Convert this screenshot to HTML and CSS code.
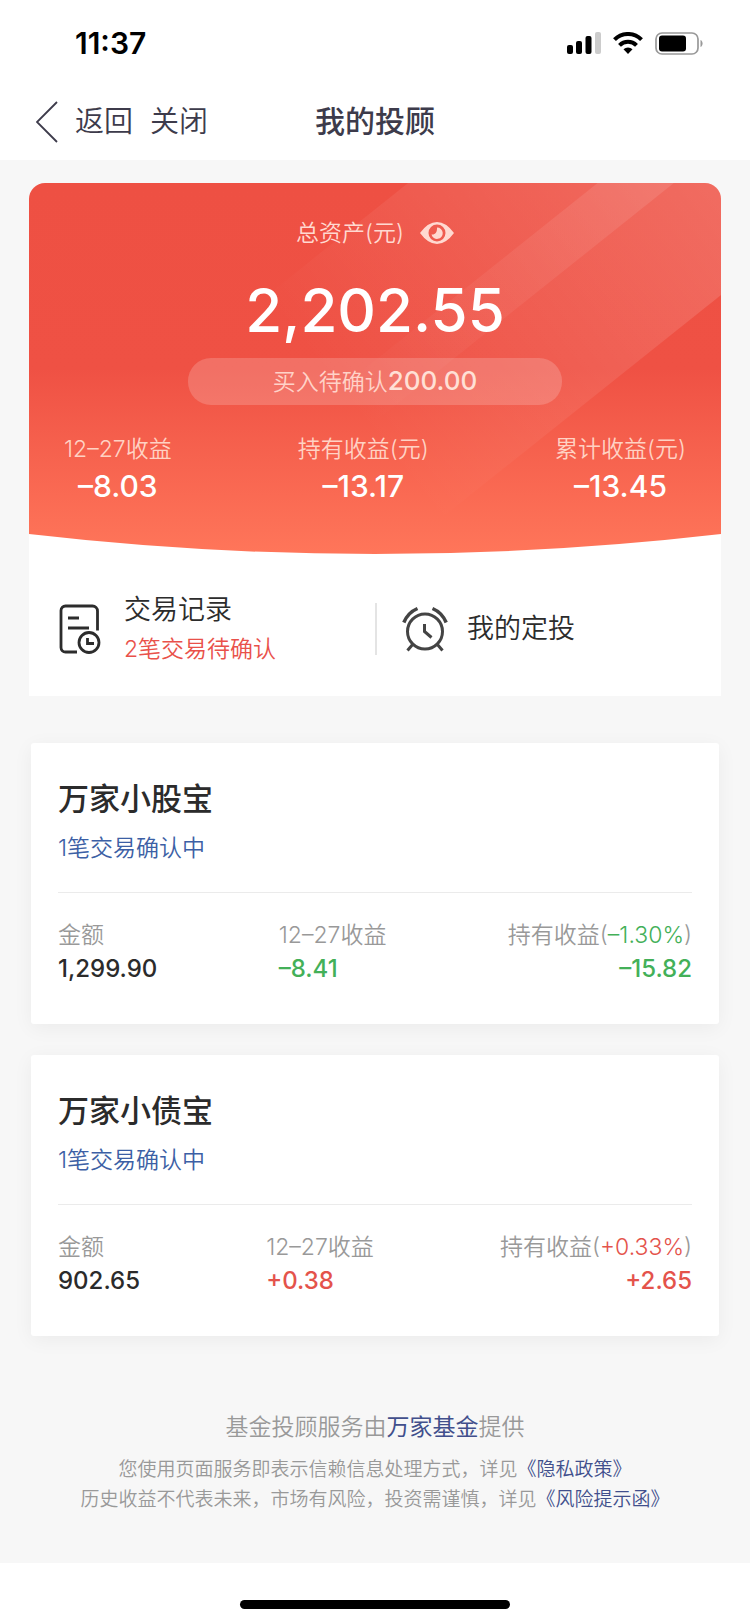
FILE: index.html
```html
<!DOCTYPE html>
<html lang="zh-CN">
<head>
<meta charset="utf-8">
<meta name="viewport" content="width=device-width, initial-scale=1">
<title>我的投顾</title>
<link rel="stylesheet" href="styles.css">
</head>
<body>
<div class="status">
  <span class="status-time">11:37</span>
  <div class="status-icons">
    <svg width="34" height="22" viewBox="0 0 34 22" aria-hidden="true"><rect x="0" y="13" width="6" height="9" rx="2"/><rect x="9" y="9" width="6" height="13" rx="2"/><rect x="18.500" y="4" width="6" height="18" rx="2"/><rect x="28" y="0" width="6" height="22" rx="2" fill="#ccc"/></svg>
    <svg width="30" height="22" viewBox="0 0 30 22" aria-hidden="true"><g fill="none" stroke="#000" stroke-width="4"><path d="M1.500 7.600a19 19 0 0 1 27 0"/><path d="M6.500 13.400a12 12 0 0 1 17 0"/></g><path d="M15 22l-4.500-4.700a6.500 6.500 0 0 1 9 0z"/></svg>
    <svg width="48" height="23" viewBox="0 0 48 23" aria-hidden="true"><rect x="1" y="1" width="42" height="21" rx="6" fill="none" stroke="#999" stroke-width="1.700"/><rect x="4" y="3.500" width="27" height="16" rx="3"/><path d="M45.500 8c2.800 1.200 2.800 5.800 0 7z" fill="#999"/></svg>
  </div>
</div>
<header class="nav">
  <div class="nav-left">
    <button class="nav-button" type="button"><svg width="22" height="42" viewBox="0 0 22 42" aria-hidden="true"><path d="M21 1L1 21l20 20" fill="none" stroke="currentColor" stroke-width="1.800"/></svg>返回</button>
    <button class="nav-button" type="button">关闭</button>
  </div>
  <h1 class="nav-title">我的投顾</h1>
</header>
<main class="page">
  <section class="summary">
    <div class="hero">
      <svg class="hero-bg" viewBox="0 0 690 372" preserveAspectRatio="none" aria-hidden="true">
        <defs>
          <linearGradient id="base" x1="0" y1="0" x2="0" y2="1"><stop offset="0" stop-color="#ee5043"/><stop offset=".5" stop-color="#ef5144"/><stop offset="1" stop-color="#ff765a"/></linearGradient>
          <linearGradient id="wide" gradientUnits="userSpaceOnUse" x1="690" y1="0" x2="350" y2="265"><stop offset="0" stop-color="#fff" stop-opacity=".16"/><stop offset="1" stop-color="#fff" stop-opacity="0"/></linearGradient>
          <linearGradient id="beam" gradientUnits="userSpaceOnUse" x1="605" y1="0" x2="330" y2="230"><stop offset="0" stop-color="#fff" stop-opacity=".1"/><stop offset="1" stop-color="#fff" stop-opacity="0"/></linearGradient>
          <clipPath id="curve"><path d="M0 0h690v351Q345 391 0 351z"/></clipPath>
        </defs>
        <g clip-path="url(#curve)"><path d="M0 0h690v372H0z" fill="url(#base)"/><path d="M378 0H690V112L365 372H-87z" fill="url(#wide)"/><path d="M567 0h76L178 372h-76z" fill="url(#beam)"/></g>
      </svg>
      <div class="hero-body">
        <div class="total-label"><span>总资产(元)</span>
          <button class="eye" type="button" aria-label="隐藏金额"><svg width="34" height="22" viewBox="0 0 34 22" aria-hidden="true"><path fill="currentColor" fill-rule="evenodd" d="M0 11Q8 0 17 0t17 11q-8 11-17 11T0 11zM17 2.500a8.500 8.500 0 1 0 0 17a8.500 8.500 0 0 0 0-17z"/><path fill="currentColor" d="M17 5.500a5.700 5.700 0 1 1-5.500 7c3.500.5 5.800-2 5.500-7z"/></svg></button>
        </div>
        <p class="total">2,202.55</p>
        <p class="pending">买入待确认<strong>200.00</strong></p>
        <dl class="stats">
          <div><dt>12–27收益</dt><dd>–8.03</dd></div>
          <div><dt>持有收益(元)</dt><dd>–13.17</dd></div>
          <div><dt>累计收益(元)</dt><dd>–13.45</dd></div>
        </dl>
      </div>
    </div>
    <nav class="actions">
      <a class="action" href="#records">
        <svg width="42" height="50" viewBox="0 0 42 50" fill="none" stroke="currentColor" stroke-width="2.800" aria-hidden="true"><path d="M18 48H6.500A4.500 4.500 0 0 1 2 43.500V6.500A4.500 4.500 0 0 1 6.500 2h27A5 5 0 0 1 38.500 7v19.500"/><path d="M9 14h11M9 24h21"/><circle cx="30" cy="38.500" r="10"/><path d="M28.500 34v5.500H35"/></svg>
        <span class="action-text">交易记录<small>2笔交易待确认</small></span>
      </a>
      <a class="action" href="#plan">
        <svg width="46" height="46" viewBox="0 0 46 46" fill="none" stroke="#444" stroke-width="3" aria-hidden="true"><circle cx="23" cy="25.500" r="17.500"/><path d="M22.500 18v7.500l7 6"/><path d="M11 38l-5.500 6.500M35 38l5.500 6.500"/><path stroke-width="3.500" d="M1.800 16.500Q6 6.500 15.500 2.500M44.200 16.500Q40 6.500 30.500 2.500"/></svg>
        <span class="action-text">我的定投</span>
      </a>
    </nav>
  </section>

  <section class="fund">
    <h2 class="fund-title">万家小股宝</h2>
    <a class="fund-note" href="#f1">1笔交易确认中</a>
    <dl class="figures">
      <div><dt>金额</dt><dd>1,299.90</dd></div>
      <div><dt>12–27收益</dt><dd class="down">–8.41</dd></div>
      <div><dt>持有收益(<span class="down">–1.30%</span>)</dt><dd class="down">–15.82</dd></div>
    </dl>
  </section>
  <section class="fund">
    <h2 class="fund-title">万家小债宝</h2>
    <a class="fund-note" href="#f2">1笔交易确认中</a>
    <dl class="figures">
      <div><dt>金额</dt><dd>902.65</dd></div>
      <div><dt>12–27收益</dt><dd class="up">+0.38</dd></div>
      <div><dt>持有收益(<span class="up">+0.33%</span>)</dt><dd class="up">+2.65</dd></div>
    </dl>
  </section>

  <footer class="footer">
    <p class="provider">基金投顾服务由<a href="#company">万家基金</a>提供</p>
    <p class="legal">您使用页面服务即表示信赖信息处理方式，详见<a href="#privacy">《隐私政策》</a></p>
    <p class="legal">历史收益不代表未来，市场有风险，投资需谨慎，详见<a href="#risk">《风险提示函》</a></p>
  </footer>
</main>
<div class="home"><span class="home-bar"></span></div>
</body>
</html>
```
FILE: styles.css
```css
* { box-sizing: border-box; margin: 0; padding: 0; }
body {
  min-height: 100vh;
  display: flex;
  flex-direction: column;
  background: #fff;
  color: #2b2b2b;
  font-family: Inter, "Noto Sans CJK SC", sans-serif;
  font-size: 23px;
  font-weight: 350;
}
a { color: inherit; text-decoration: none; }
button { border: 0; background: none; color: inherit; font: inherit; cursor: pointer; }
svg { display: block; flex: none; }

.status { display: flex; align-items: center; justify-content: space-between; height: 82px; padding: 4px 47px 0 75px; color: #000; }
.status-time { font-size: 30px; font-weight: 600; }
.status-icons { display: flex; align-items: center; gap: 12px; }

.nav { display: grid; grid-template-columns: 1fr auto 1fr; align-items: center; height: 78px; padding: 0 36px; color: #3d3b4b; }
.nav-left { display: flex; align-items: center; gap: 17px; padding-top: 2px; }
.nav-button { display: flex; align-items: center; gap: 17px; font-size: 29px; line-height: 42px; }
.nav-title { font-size: 30px; line-height: 42px; font-weight: 500; }

.page { flex: 1; padding: 23px 29px 48px; background: #f7f7f7; }

.summary { background: #fff; border-radius: 16px 16px 0 0; overflow: hidden; }
.hero { position: relative; color: #fff; }
.hero-bg { position: absolute; inset: 0; width: 100%; height: 100%; }
.hero-body { position: relative; padding: 29px 35px 50px; }
.total-label { display: flex; align-items: center; justify-content: center; gap: 16px; line-height: 42px; color: #ffd9d1; }
.total { margin-top: 19px; text-align: center; font-size: 60px; line-height: 74px; font-weight: 450; }
.pending { width: 54%; min-width: 374px; margin: 11px auto 0; border-radius: 23px; background: rgba(255, 255, 255, .18); text-align: center; line-height: 46px; color: #ffd2c8; }
.pending strong { font-size: 26px; font-weight: 500; color: #ffe0d6; }
.stats { display: flex; justify-content: space-between; margin-top: 26px; text-align: center; }
.stats dt { line-height: 36px; color: #ffd2c4; }
.stats dd { font-size: 30px; line-height: 38px; font-weight: 450; }

.actions { display: grid; grid-template-columns: 1fr 1fr; padding: 34px 0 28px; }
.action { display: flex; align-items: center; min-height: 79px; padding-left: 30px; gap: 23px; color: #2c2c2c; }
.action + .action { padding-left: 27px; gap: 19px; background: linear-gradient(#e4e4e4, #e4e4e4) left center / 2px 52px no-repeat; }
.action-text { font-size: 27px; line-height: 40px; }
.action-text small { display: block; font-size: 23px; line-height: 38px; color: #e9514a; }

.fund { margin: 31px 2px 0; padding: 35px 27px 38px; background: #fff; border-radius: 3px; box-shadow: 0 4px 20px rgba(0, 0, 0, .05); }
.summary + .fund { margin-top: 47px; }
.fund-title { font-size: 31px; line-height: 42px; font-weight: 500; }
.fund-note { display: block; margin-top: 11px; line-height: 34px; color: #3c5fa5; }
.figures { display: flex; justify-content: space-between; margin-top: 27px; padding-top: 25px; border-top: 1px solid #ebebeb; line-height: 34px; }
.figures dt { color: #999; }
.figures dd { font-size: 24px; font-weight: 450; }
.figures > :last-child { text-align: right; }
.figures .up { color: #e4534b; }
.figures .down { color: #43b058; }

.footer { margin-top: 74px; text-align: center; color: #999; }
.footer a { color: #414f8c; }
.provider { margin-bottom: 11px; line-height: 34px; }
.provider a { font-weight: 400; }
.legal { font-size: 19px; line-height: 30px; }

.home { display: flex; justify-content: center; padding: 37px 0 14px; }
.home-bar { width: 36%; height: 9px; border-radius: 5px; background: #000; }
```
